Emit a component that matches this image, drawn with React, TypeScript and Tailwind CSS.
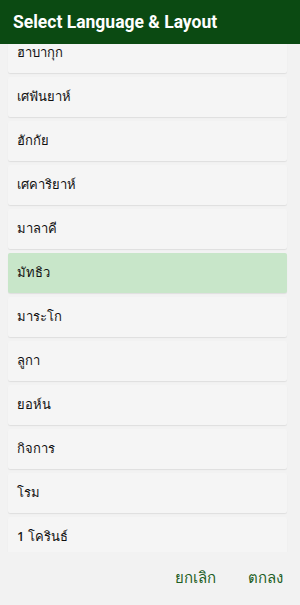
const items = [
  "ฮาบากุก",
  "เศฟันยาห์",
  "ฮักกัย",
  "เศคาริยาห์",
  "มาลาคี",
  "มัทธิว",
  "มาระโก",
  "ลูกา",
  "ยอห์น",
  "กิจการ",
  "โรม",
  "1 โครินธ์",
];

export default function App() {
  const selected = "มัทธิว";
  return (
    <div
      className="w-[300px] h-[605px] flex flex-col bg-[#f2f2f2] overflow-hidden"
      style={{ fontFamily: '"Noto Sans", "DejaVu Sans", sans-serif' }}
    >
      {/* Title bar */}
      <div className="h-[44px] shrink-0 bg-[#0b4a12] flex items-center px-[13px] z-10">
        <span className="text-white font-bold text-[17.5px]" style={{ fontFamily: 'Roboto, "Liberation Sans", sans-serif' }}>
          Select Language &amp; Layout
        </span>
      </div>

      {/* List */}
      <div className="h-[508px] shrink-0 overflow-hidden flex">
        <div className="flex-1 flex flex-col gap-[4px] pl-[8px] pr-[13px] -mt-[11px]">
          {items.map((name) => (
            <div
              key={name}
              className={`h-[40px] shrink-0 flex items-center px-[9px] rounded-[2px] shadow-[0_1px_1px_rgba(0,0,0,0.08)] ${
                name === selected ? "bg-[#c8e6c9]" : "bg-[#f5f5f5]"
              }`}
            >
              <span className="text-[13px] font-medium text-[#111]">{name}</span>
            </div>
          ))}
        </div>
      </div>

      {/* Buttons */}
      <div className="flex-1 flex items-center justify-end gap-[32px] pr-[17px] pb-[2px]">
        <button className="text-[15px] text-[#1e5e24]">ยกเลิก</button>
        <button className="text-[15px] text-[#1e5e24]">ตกลง</button>
      </div>
    </div>
  );
}
